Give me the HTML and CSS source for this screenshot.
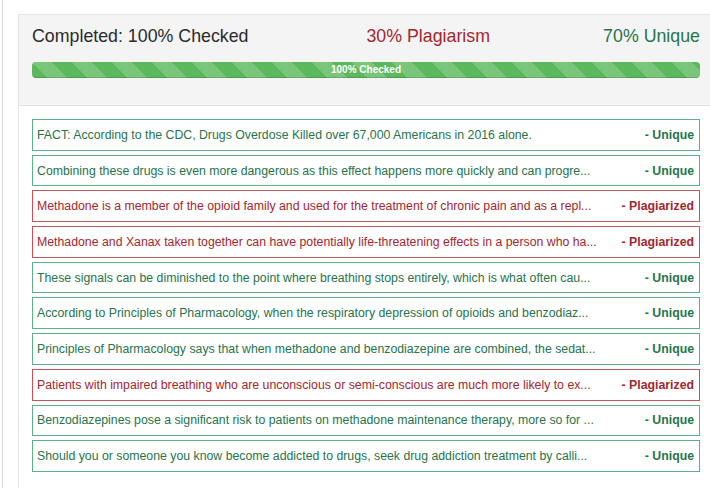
FILE: index.html
```html
<!DOCTYPE html>
<html>
<head>
<meta charset="utf-8">
<link rel="stylesheet" href="styles.css">
</head>
<body>
<div class="frame">
  <div class="panel">
    <div class="head">
      <div class="stats">
        <span class="done">Completed: 100% Checked</span>
        <span class="plag">30% Plagiarism</span>
        <span class="uniq">70% Unique</span>
      </div>
      <div class="bar"><div class="fill">100% Checked</div></div>
    </div>
    <div class="list">
      <div class="row ok"><span class="txt">FACT: According to the CDC, Drugs Overdose Killed over 67,000 Americans in 2016 alone.</span><span class="tag">- Unique</span></div>
      <div class="row ok"><span class="txt">Combining these drugs is even more dangerous as this effect happens more quickly and can progre...</span><span class="tag">- Unique</span></div>
      <div class="row bad"><span class="txt">Methadone is a member of the opioid family and used for the treatment of chronic pain and as a repl...</span><span class="tag">- Plagiarized</span></div>
      <div class="row bad"><span class="txt">Methadone and Xanax taken together can have potentially life-threatening effects in a person who ha...</span><span class="tag">- Plagiarized</span></div>
      <div class="row ok"><span class="txt">These signals can be diminished to the point where breathing stops entirely, which is what often cau...</span><span class="tag">- Unique</span></div>
      <div class="row ok"><span class="txt">According to Principles of Pharmacology, when the respiratory depression of opioids and benzodiaz...</span><span class="tag">- Unique</span></div>
      <div class="row ok"><span class="txt">Principles of Pharmacology says that when methadone and benzodiazepine are combined, the sedat...</span><span class="tag">- Unique</span></div>
      <div class="row bad"><span class="txt">Patients with impaired breathing who are unconscious or semi-conscious are much more likely to ex...</span><span class="tag">- Plagiarized</span></div>
      <div class="row ok"><span class="txt">Benzodiazepines pose a significant risk to patients on methadone maintenance therapy, more so for ...</span><span class="tag">- Unique</span></div>
      <div class="row ok"><span class="txt">Should you or someone you know become addicted to drugs, seek drug addiction treatment by calli...</span><span class="tag">- Unique</span></div>
    </div>
  </div>
</div>
</body>
</html>
```
FILE: styles.css
```css
html, body {
  margin: 0;
  padding: 0;
  background: #ffffff;
  font-family: "Liberation Sans", Arial, Helvetica, sans-serif;
}
.frame {
  margin-left: 2px;
  border-left: 1px solid #dcdcdc;
  padding-left: 15px;
  padding-top: 14px;
  height: 474px;
  overflow: hidden;
}
.panel {
  border-left: 1px solid #e4e4e4;
  border-top: 1px solid #e4e4e4;
  height: 100%;
}
.head {
  background: #f4f4f4;
  border-bottom: 1px solid #e2e2e2;
  padding: 10px 10px 27px 13px;
}
.stats {
  display: flex;
  font-size: 17.8px;
  line-height: 22px;
}
.done { color: #2b2b2b; }
.plag { color: #a3272d; margin-left: 118px; }
.uniq { color: #27744a; margin-left: auto; }
.bar {
  margin-top: 15px;
  height: 16px;
  border-radius: 4px;
  background: #e9e9e9;
  overflow: hidden;
}
.fill {
  height: 100%;
  background-color: #5cb85c;
  background-image: linear-gradient(45deg, rgba(255,255,255,.18) 25%, transparent 25%, transparent 50%, rgba(255,255,255,.18) 50%, rgba(255,255,255,.18) 75%, transparent 75%, transparent);
  background-size: 40px 40px;
  color: #fff;
  font-size: 10px;
  font-weight: bold;
  line-height: 16px;
  text-align: center;
  box-shadow: inset 0 -1px 0 rgba(0,0,0,.15);
}
.list {
  padding: 13px 10px 0 13px;
  display: flex;
  flex-direction: column;
  gap: 4px;
}
.row {
  display: flex;
  justify-content: space-between;
  align-items: center;
  height: 29.7px;
  padding: 0 5px 0 4px;
  font-size: 12.3px;
  white-space: nowrap;
  background: #fff;
}
.row.ok {
  border: 1px solid #5fb08a;
  color: #27744a;
}
.row.bad {
  border: 1px solid #c6545c;
  color: #a3272d;
}
.txt { overflow: hidden; }
.tag { font-weight: bold; margin-left: 10px; }
```
